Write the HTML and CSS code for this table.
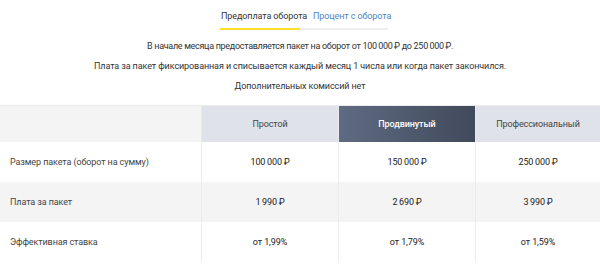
FILE: index.html
```html
<!DOCTYPE html>
<html lang="ru">
<head>
<meta charset="utf-8">
<link rel="stylesheet" href="styles.css">
</head>
<body>
<div class="tabs">
  <div class="tab active">Предоплата оборота</div>
  <div class="tab link">Процент с оборота</div>
</div>
<div class="intro">
  <p class="tight">В начале месяца предоставляется пакет на оборот от 100&thinsp;000&thinsp;₽ до 250&thinsp;000&thinsp;₽.</p>
  <p>Плата за пакет фиксированная и списывается каждый месяц 1 числа или когда пакет закончился.</p>
  <p>Дополнительных комиссий нет</p>
</div>
<div class="table">
  <div class="cell head first"></div>
  <div class="cell head col">Простой</div>
  <div class="cell head col dark">Продвинутый</div>
  <div class="cell head col">Профессиональный</div>

  <div class="cell label">Размер пакета (оборот на сумму)</div>
  <div class="cell col">100&thinsp;000&thinsp;₽</div>
  <div class="cell col">150&thinsp;000&thinsp;₽</div>
  <div class="cell col">250&thinsp;000&thinsp;₽</div>

  <div class="cell label alt">Плата за пакет</div>
  <div class="cell col alt">1&thinsp;990&thinsp;₽</div>
  <div class="cell col alt">2&thinsp;690&thinsp;₽</div>
  <div class="cell col alt">3&thinsp;990&thinsp;₽</div>

  <div class="cell label">Эффективная ставка</div>
  <div class="cell col">от 1,99%</div>
  <div class="cell col">от 1,79%</div>
  <div class="cell col">от 1,59%</div>
</div>
</body>
</html>
```
FILE: styles.css
```css
* { box-sizing: border-box; }
html, body { margin: 0; padding: 0; background: #fff; }
body {
  font-family: Roboto, "Noto Sans", sans-serif;
  font-size: 9px;
  letter-spacing: -0.1px;
  color: #333;
  width: 600px;
  overflow: hidden;
}
.tabs {
  display: flex;
  gap: 13px;
  width: 168px;
  margin-left: 220px;
  padding-top: 9px;
  border-bottom: 2px solid #eeeeee;
  white-space: nowrap;
}
.tab {
  height: 21px;
  line-height: 14px;
  margin-bottom: -2px;
  border-bottom: 2px solid transparent;
}
.tab.active { border-bottom-color: #ffdd2d; color: #333; width: 80px; padding-left: 1px; }
.tab.link { color: #4f86c6; }
.intro {
  text-align: center;
  color: #333;
  padding-top: 6px;
  white-space: nowrap;
}
.intro p {
  margin: 0;
  line-height: 20px;
}
.intro .tight { letter-spacing: -0.3px; }
.table {
  margin-top: 9px;
  display: grid;
  grid-template-columns: 201px 137px 137px 1fr;
  grid-auto-rows: 40px;
  grid-template-rows: 36px;
  border-top: 1px solid #ececec;
  white-space: nowrap;
}
.cell {
  display: flex;
  align-items: center;
}
.label { padding-left: 10px; color: #444; }
.col {
  justify-content: center;
  border-left: 1px solid #ececec;
  color: #222;
}
.head { background: #dfe2e8; color: #444; border-left-color: #e8eaee; }
.head.first { background: #f4f4f4; }
.head.dark {
  background: linear-gradient(90deg, #5f6b82, #414a5b);
  color: #fff;
  font-weight: 500;
}
.alt { background: #f4f4f4; }
```
